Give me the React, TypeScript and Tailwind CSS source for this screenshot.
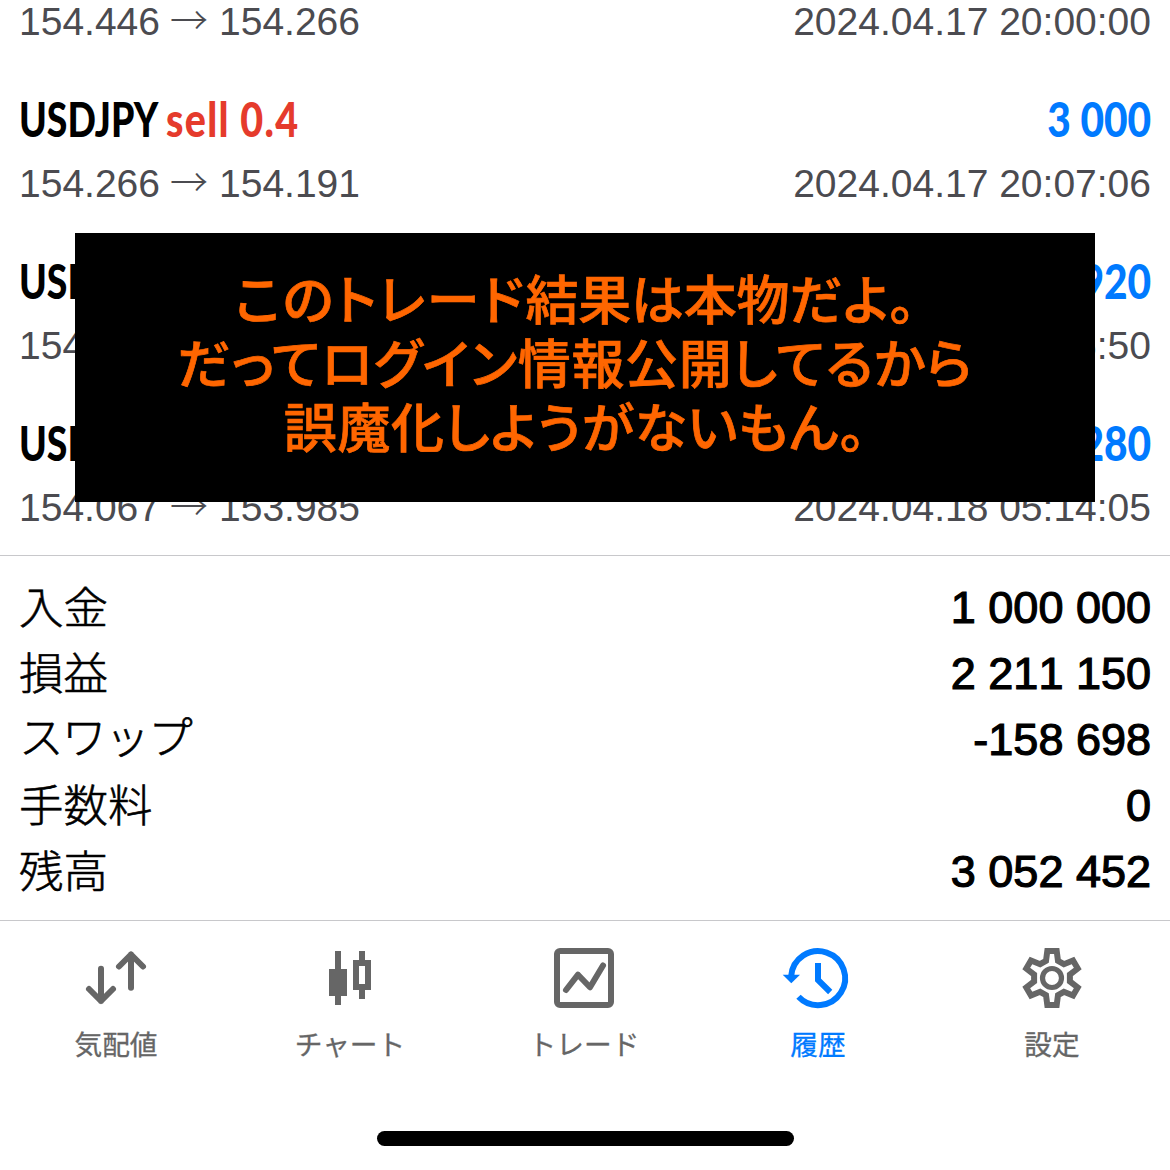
import { ReactNode } from "react";

type Deal = {
  symbol?: string;
  side?: string;
  profit?: string;
  open: string;
  close: string;
  time: string;
};

// The first deal is scrolled so that only its price line is left
const deals: Deal[] = [
  { open: "154.446", close: "154.266", time: "2024.04.17 20:00:00" },
  { symbol: "USDJPY", side: "sell 0.4", open: "154.266", close: "154.191", profit: "3 000", time: "2024.04.17 20:07:06" },
  { symbol: "USDJPY", side: "sell 0.4", open: "154.191", close: "154.068", profit: "4 920", time: "2024.04.17 21:36:50" },
  { symbol: "USDJPY", side: "sell 0.4", open: "154.067", close: "153.985", profit: "3 280", time: "2024.04.18 05:14:05" },
];

const summary = [
  { label: "入金", value: "1 000 000" },
  { label: "損益", value: "2 211 150" },
  { label: "スワップ", value: "-158 698", tight: true },
  { label: "手数料", value: "0" },
  { label: "残高", value: "3 052 452" },
];

// One tooth of the gear, pointing up, relative to the centre
const tooth = [
  [-6, -17.2],
  [-4.7, -27],
  [4.7, -27],
  [6, -17.2],
];

// Repeats the tooth six times around the centre
const gearPoints = [0, 60, 120, 180, 240, 300]
  .flatMap((deg) => {
    const a = (deg * Math.PI) / 180;
    return tooth.map(
      ([x, y]) =>
        `${(36 + x * Math.cos(a) - y * Math.sin(a)).toFixed(2)},${(36 + x * Math.sin(a) + y * Math.cos(a)).toFixed(2)}`
    );
  })
  .join(" ");

function Icon({ children }: { children: ReactNode }) {
  return (
    <svg className="size-[72px]" viewBox="0 0 72 72" fill="none" stroke="currentColor" strokeWidth="6">
      {children}
    </svg>
  );
}

const tabs = [
  {
    label: "気配値",
    icon: (
      <Icon>
        <path d="M21 26.7V59M9 47l12 12 12-12M51 45.7V12.5M39 24.5l12-12 12 12" strokeLinecap="round" strokeLinejoin="round" />
      </Icon>
    ),
  },
  {
    label: "チャート",
    icon: (
      <Icon>
        <path d="M24 9v54M48 9v9M48 48v9" />
        <path d="M15 27h18v27H15z" fill="currentColor" stroke="none" />
        <path d="M42 21h12v24H42z" />
      </Icon>
    ),
  },
  {
    label: "トレード",
    icon: (
      <Icon>
        <rect x="9" y="9" width="54" height="54" rx="3" />
        <path d="M18 48l12-15.3 12 12.6L55 23.5" strokeLinecap="round" strokeLinejoin="round" />
      </Icon>
    ),
  },
  {
    label: "履歴",
    active: true,
    icon: (
      <Icon>
        <path d="M9.2 34A27 27 0 1 1 16.5 54.7M36 21v17l12.2 12" />
        <path d="M.7 32.7H18l-8.7 8.6z" fill="currentColor" stroke="none" />
      </Icon>
    ),
  },
  {
    label: "設定",
    icon: (
      <Icon>
        <polygon points={gearPoints} strokeLinejoin="miter" />
        <circle cx="36" cy="36" r="9.5" strokeWidth="5.2" />
      </Icon>
    ),
  },
];

function DealRow({ deal }: { deal: Deal }) {
  return (
    <div>
      {deal.symbol && (
        <div className="mb-[11px] flex h-[60px] justify-between font-[Lato,sans-serif] text-[47px] leading-[60px] font-black whitespace-nowrap">
          <div className="flex">
            <span className="w-[147px] origin-left scale-x-[0.795] text-black">{deal.symbol}</span>
            <span className="origin-left scale-x-[0.84] tracking-[1.5px] text-[#e53b2c]">{deal.side}</span>
          </div>
          <span className="origin-right scale-x-[0.865] text-[#007aff]">{deal.profit}</span>
        </div>
      )}
      <div className="flex h-12 justify-between font-['Liberation_Sans',sans-serif] text-[39px] leading-12 text-[#4b4b50]">
        <div className="flex">
          <span>{deal.open}</span>
          <span className="-mt-[4px] mr-[11px] ml-[10px] font-['Noto_Sans_CJK_JP',sans-serif] text-[38px] font-light">→</span>
          <span>{deal.close}</span>
        </div>
        <span>{deal.time}</span>
      </div>
    </div>
  );
}

export default function App() {
  return (
    <div className="relative flex h-[1170px] w-[1170px] flex-col overflow-hidden bg-white">
      {/* Deal history, scrolled to the end */}
      <div className="flex h-[555px] flex-col justify-end gap-[43px] pr-[19px] pb-[23px] pl-[19px]">
        {deals.map((deal) => (
          <DealRow key={deal.time} deal={deal} />
        ))}
      </div>

      {/* Account totals */}
      <div className="h-[365px] border-t border-[#c8c8cb] pt-[19px] pr-[19px] pl-[19px] text-black">
        {summary.map((row) => (
          <div key={row.label} className="flex h-[66px] items-center justify-between">
            <span
              className={`font-['Noto_Sans_CJK_JP',sans-serif] text-[44.5px] leading-[66px] font-light [-webkit-text-stroke:0.6px_black] ${row.tight ? "-mt-[10px] tracking-[-1.4px]" : "-mt-[7px]"}`}
            >
              {row.label}
            </span>
            <span className="font-['Liberation_Sans',sans-serif] text-[45px] leading-[66px] [font-kerning:none] [-webkit-text-stroke:1.2px_black]">
              {row.value}
            </span>
          </div>
        ))}
      </div>

      {/* Tab bar */}
      <div className="flex h-[250px] border-t border-[#c8c8cb] pt-[21px]">
        {tabs.map((tab) => (
          <div
            key={tab.label}
            className={`flex w-[234px] flex-col items-center pr-0.5 ${tab.active ? "text-[#007aff]" : "text-[#666666]"}`}
          >
            {tab.icon}
            <span className="mt-[9px] font-['Noto_Sans_CJK_JP',sans-serif] text-[27.7px] leading-10 [-webkit-text-stroke:0.3px_currentColor]">
              {tab.label}
            </span>
          </div>
        ))}
      </div>

      <div className="absolute top-[1131px] left-[377px] h-[15px] w-[417px] rounded-full bg-black" />

      {/* Caption over the list */}
      <div className="absolute top-[232.6px] left-[75px] flex h-[269px] w-[1020px] flex-col items-center bg-black pt-[32px] pr-5 font-['Noto_Sans_CJK_JP',sans-serif] text-[53px] leading-[64px] font-medium tracking-[0.7px] text-[#ff6600] [-webkit-text-stroke:0.7px_#ff6600] [font-feature-settings:'palt']">
        <p className="tracking-[-0.2px]">
          <span className="tracking-[2px]">このトレード</span>結果は本物だよ。
        </p>
        <p>だってログイン情報公開してるから</p>
        <p>誤魔化しようがないもん。</p>
      </div>
    </div>
  );
}
